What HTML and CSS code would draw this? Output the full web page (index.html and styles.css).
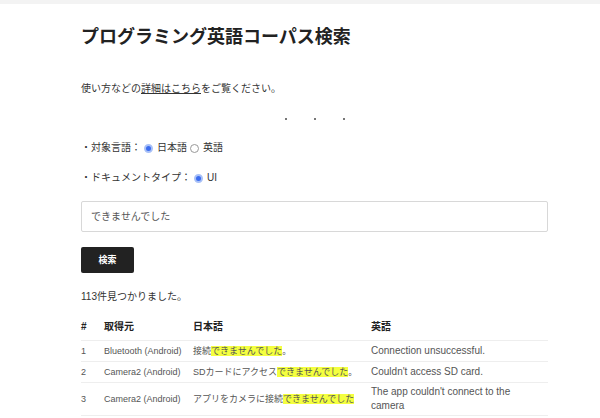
FILE: index.html
```html
<!DOCTYPE html>
<html lang="ja">
<head>
    <meta charset="utf-8">
    <link rel="stylesheet" href="styles.css">
</head>
<body>
    <div class="topbar"></div>

    <div class="page">
        <h1 class="title">プログラミング英語コーパス検索</h1>

        <p class="intro">使い方などの<a href="#">詳細はこちら</a>をご覧ください。</p>

        <div class="dots">
            <span class="dot"></span>
            <span class="dot"></span>
            <span class="dot"></span>
        </div>

        <div class="option">
            ・対象言語：
            <span class="radio checked"></span>日本語
            <span class="radio"></span>英語
        </div>

        <div class="option option-second">
            ・ドキュメントタイプ：
            <span class="radio checked"></span>UI
        </div>

        <div class="search-box">できませんでした</div>

        <div class="button">検索</div>

        <p class="count">113件見つかりました。</p>

        <table class="results">
            <colgroup>
                <col class="col-num">
                <col class="col-src">
                <col class="col-ja">
                <col class="col-en">
            </colgroup>
            <thead>
                <tr>
                    <th>#</th>
                    <th>取得元</th>
                    <th>日本語</th>
                    <th>英語</th>
                </tr>
            </thead>
            <tbody>
                <tr>
                    <td>1</td>
                    <td>Bluetooth (Android)</td>
                    <td>接続<mark>できませんでした</mark>。</td>
                    <td class="en">Connection unsuccessful.</td>
                </tr>
                <tr>
                    <td>2</td>
                    <td>Camera2 (Android)</td>
                    <td>SDカードにアクセス<mark>できませんでした</mark>。</td>
                    <td class="en">Couldn't access SD card.</td>
                </tr>
                <tr>
                    <td>3</td>
                    <td>Camera2 (Android)</td>
                    <td>アプリをカメラに接続<mark>できませんでした</mark></td>
                    <td class="en">The app couldn't connect to the camera</td>
                </tr>
            </tbody>
        </table>
    </div>
</body>
</html>
```

FILE: styles.css
```css
body {
    margin: 0;
    background: #fff;
    color: #333;
    font-family: "Liberation Sans", "Noto Sans CJK JP", sans-serif;
    overflow: hidden;
}

.topbar {
    height: 4px;
    background: #f3f3f3;
}

.page {
    padding: 0 52px 0 81px;
}

.title {
    margin: 21px 0 0;
    font-size: 18px;
    line-height: 24px;
    font-weight: bold;
    color: #222;
}

.intro {
    margin: 32px 0 0;
    font-size: 10px;
    line-height: 16px;
}

.intro a {
    color: #333;
    text-decoration: underline;
}

.dots {
    display: flex;
    justify-content: center;
    gap: 27px;
    margin-top: 21px;
}

.dot {
    width: 2px;
    height: 2px;
    background: #777;
}

.option {
    display: flex;
    align-items: center;
    margin-top: 20px;
    font-size: 10px;
    line-height: 16px;
    color: #333;
}

.option-second {
    margin-top: 14px;
}

.radio {
    box-sizing: border-box;
    width: 9px;
    height: 9px;
    margin: 0 4px 0 3px;
    border: 1px solid #999;
    border-radius: 50%;
    background: #fff;
}

.radio.checked {
    border: 2px solid #a9c1f7;
    background: #3b6cf0;
}

.search-box {
    box-sizing: border-box;
    height: 31px;
    margin-top: 15px;
    padding: 0 9px;
    border: 1px solid #d8d8d8;
    border-radius: 2px;
    font-size: 10px;
    line-height: 29px;
    color: #555;
}

.button {
    width: 53px;
    height: 26px;
    margin-top: 15px;
    border-radius: 2px;
    background: #222;
    color: #fff;
    font-size: 9px;
    font-weight: bold;
    line-height: 26px;
    text-align: center;
}

.count {
    margin: 16px 0 0;
    font-size: 10px;
    line-height: 16px;
}

.results {
    width: 100%;
    margin-top: 9px;
    border-collapse: collapse;
    table-layout: fixed;
}

.col-num { width: 23px; }
.col-src { width: 89px; }
.col-ja { width: 178px; }

.results th {
    padding: 6px 4px 6px 0;
    border-bottom: 1px solid #eee;
    font-size: 10px;
    line-height: 14px;
    text-align: left;
    color: #222;
}

.results td {
    padding: 3px 4px 3px 0;
    border-bottom: 1px solid #eee;
    font-size: 9px;
    line-height: 14px;
    color: #555;
    white-space: nowrap;
    vertical-align: middle;
}

.results td.en {
    padding: 2px 20px 2px 0;
    font-size: 10px;
    white-space: normal;
}

.results mark {
    background: #f4ff3f;
    color: #555;
}
```
